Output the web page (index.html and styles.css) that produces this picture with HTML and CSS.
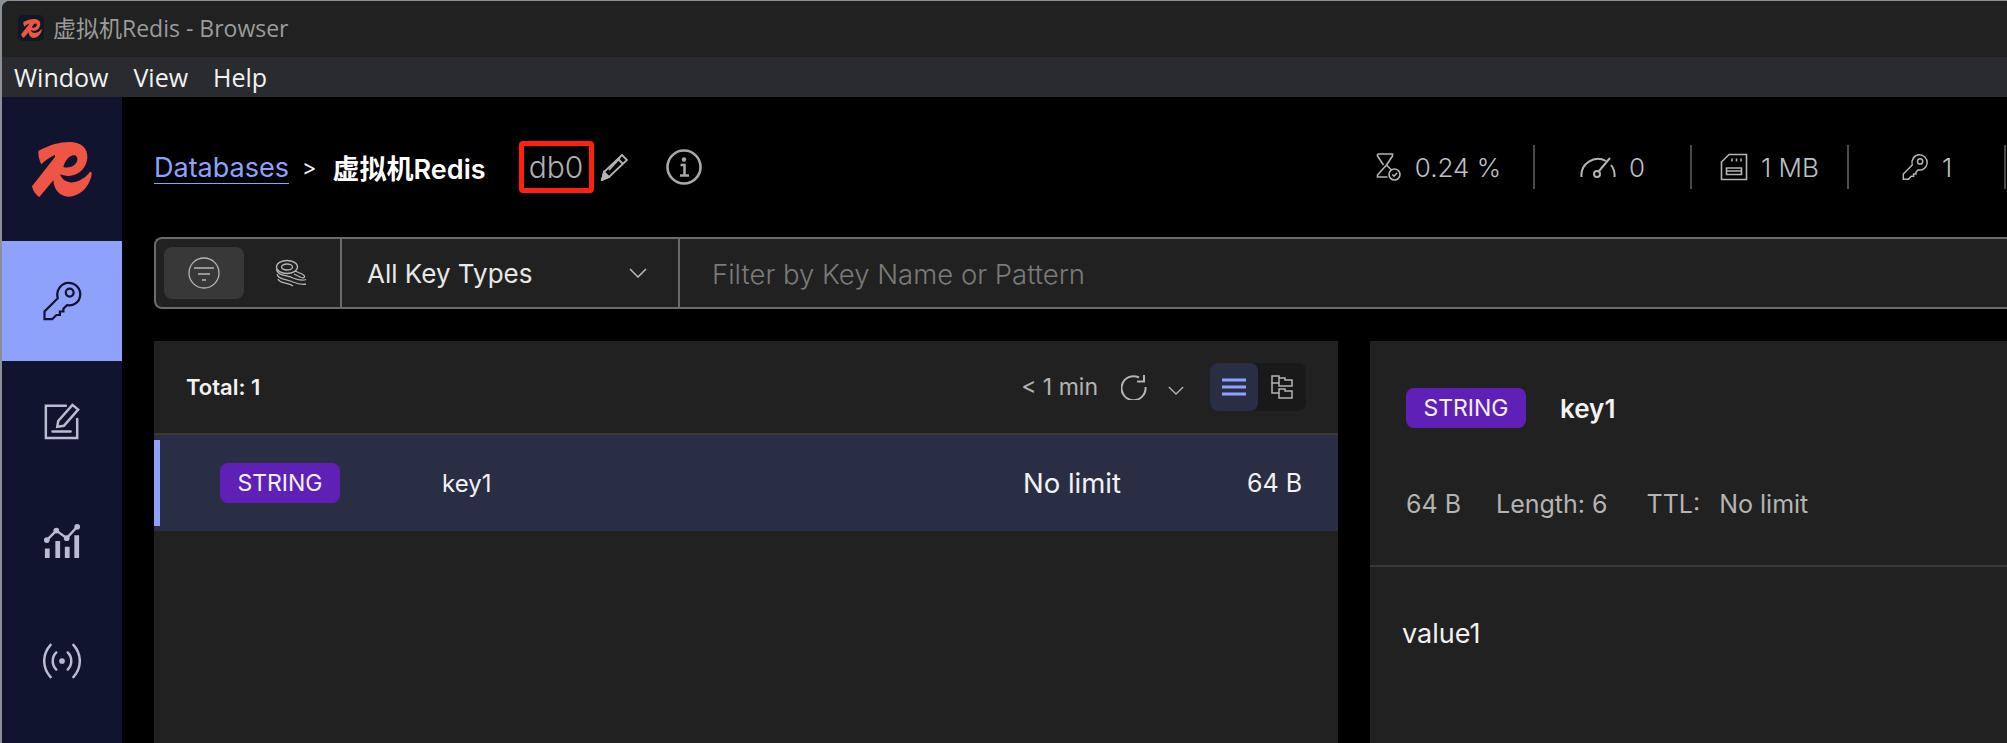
FILE: index.html
```html
<!DOCTYPE html>
<html lang="en">
<head>
  <meta charset="UTF-8">
  <title>虚拟机Redis - Browser</title>
  <link rel="stylesheet" href="styles.css">
</head>
<body>
  <svg class="defs" width="0" height="0">
    <symbol id="logo" viewBox="96 125 180 165">
      <path fill-rule="evenodd" d="M115 152 C150 133 180 125 208 125 C245 125 264 145 262 172 C260 200 240 222 212 226 C200 228 188 225 180 222 C186 240 205 250 225 245 C245 240 260 228 270 214 C276 214 276 220 274 228 C265 265 235 290 205 289 C180 288 162 270 160 240 L118 290 C108 285 98 270 96 258 L165 170 L165 163 C150 170 135 180 124 192 C118 180 114 165 115 152Z M190 200 C195 180 210 162 225 165 C235 170 235 185 222 195 C212 202 200 203 190 200Z"/>
    </symbol>
    <symbol id="key" viewBox="0 0 30 30">
      <path d="M19.5 2 C24.5 2 28.5 6 28 11 C27.5 16 23 19 18.5 18 L16 20.5 V22.5 H13.5 V25 H11 L8 28 H2.5 V22.5 L12 13 C10.5 8 14 2 19.5 2Z"/>
      <circle cx="20.5" cy="9" r="2.8"/>
    </symbol>
  </svg>

  <div class="window">
    <!-- Title + menu -->
    <div class="titlebar">
      <span class="app-icon"><svg class="logo-small"><use href="#logo"/></svg></span>
      <span class="app-title">虚拟机Redis - Browser</span>
    </div>
    <div class="menubar">
      <span>Window</span>
      <span>View</span>
      <span>Help</span>
    </div>

    <div class="app">
      <!-- Sidebar -->
      <nav class="sidebar">
        <div class="side-logo"><svg class="logo-big"><use href="#logo"/></svg></div>
        <div class="side-item active"><svg class="icon side-key"><use href="#key"/></svg></div>
        <div class="side-item">
          <svg class="icon side-icon" viewBox="0 0 40 40">
            <path d="M24 4 H3 V38 H36 V18"/>
            <path d="M15 26 L16 20 L31 3 L37 8 L22 25 Z"/>
            <path d="M10 31 H29"/>
          </svg>
        </div>
        <div class="side-item">
          <svg class="icon side-icon" viewBox="0 0 40 40">
            <path d="M4 19 L14 9 L25 17 L36 5"/>
            <circle class="dot" cx="4" cy="19" r="3"/>
            <circle class="dot" cx="14" cy="9" r="3"/>
            <circle class="dot" cx="25" cy="17" r="3"/>
            <circle class="dot" cx="36" cy="5" r="3"/>
            <path class="bar" d="M2 28 h5 v10 h-5z M13 20 h5 v18 h-5z M23 26 h5 v12 h-5z M33 14 h5 v24 h-5z"/>
          </svg>
        </div>
        <div class="side-item">
          <svg class="icon side-icon" viewBox="0 0 40 40">
            <path d="M8 3 C-1 13 -1 27 8 37"/>
            <path d="M32 3 C41 13 41 27 32 37"/>
            <path d="M14 11 C9 16 9 24 14 29"/>
            <path d="M26 11 C31 16 31 24 26 29"/>
            <circle class="dot" cx="20" cy="20" r="3"/>
          </svg>
        </div>
      </nav>

      <main class="main">
        <!-- Header -->
        <header class="header">
          <a class="crumb-link">Databases</a>
          <span class="crumb-sep">&gt;</span>
          <span class="crumb-name">虚拟机Redis</span>
          <span class="db-index">db0</span>
          <svg class="icon pencil" viewBox="0 0 28 28">
            <path d="M22 2 L27 7 L9 24 L2 27 L4 19 Z"/>
            <path d="M18 6 L23 11"/>
            <path d="M9 17 L20 5"/>
            <path class="tip" d="M4 19 L9 24 L2 27 Z"/>
          </svg>
          <svg class="icon info" viewBox="0 0 36 36">
            <circle cx="18" cy="18" r="16.5"/>
            <circle class="dot" cx="18" cy="10.5" r="2.2"/>
            <path d="M14.5 16 H18.5 V26 M14 26.5 H23"/>
          </svg>
          <div class="stats">
            <div class="stat stat-cpu">
              <svg class="icon stat-icon" viewBox="0 0 25 28">
                <path d="M2 1 H17 V3 L11 12 L16 17 M11 12 L2 22 V24 H12 M2 1 V3 L8 12"/>
                <circle cx="19" cy="21.5" r="5.5"/>
                <path d="M16.8 21.5 L18.5 23.2 L21.5 20"/>
              </svg>
              <span>0.24 %</span>
            </div>
            <div class="stat">
              <svg class="icon gauge" viewBox="0 0 36 22">
                <path d="M1.5 21 A16.5 16.5 0 0 1 26 5"/>
                <path d="M31 9 A16.5 16.5 0 0 1 34.5 21"/>
                <path d="M19 15 L30 2"/>
                <circle cx="17" cy="18" r="3"/>
              </svg>
              <span>0</span>
            </div>
            <div class="stat">
              <svg class="icon stat-icon" viewBox="0 0 28 28">
                <path d="M9 1.5 H26.5 V26.5 H1.5 V9 Z"/>
                <path d="M6.5 15 H21.5 V21.5 H6.5 Z"/>
                <path d="M12 5.5 V8.5 M16.5 5.5 V8.5 M21 5.5 V8.5"/>
                <path d="M6.5 18 H21.5"/>
              </svg>
              <span>1 MB</span>
            </div>
            <div class="stat">
              <svg class="icon stat-icon"><use href="#key"/></svg>
              <span>1</span>
            </div>
          </div>
        </header>

        <!-- Filter bar -->
        <div class="filter-bar">
          <div class="mode-group">
            <button class="mode-btn on">
              <svg class="icon mode-icon" viewBox="0 0 32 32">
                <circle cx="16" cy="16" r="15"/>
                <path d="M6 11 H26 M10 17 H22 M14 23 H18"/>
              </svg>
            </button>
            <button class="mode-btn">
              <svg class="icon mode-icon" viewBox="0 0 32 28">
                <ellipse cx="12" cy="8" rx="10.5" ry="6.5"/>
                <ellipse cx="12" cy="8" rx="5.5" ry="3"/>
                <path d="M20 12 L27 15 C31 17 30 20 26 18.5 L19 15"/>
                <path d="M1.5 10 C2 17 12 16 18 19 C23 21 27 22 31 20.5"/>
                <path d="M2 15 C3 21 13 20 18 23 C23 25 27 26 31 25"/>
                <path d="M3 20 C5 25 13 23 18 27"/>
              </svg>
            </button>
          </div>
          <div class="type-select">
            <span>All Key Types</span>
            <svg class="icon chevron" viewBox="0 0 18 10"><path d="M1 1 L9 9 L17 1"/></svg>
          </div>
          <div class="filter-input">Filter by Key Name or Pattern</div>
        </div>

        <div class="panels">
          <!-- Key list -->
          <section class="panel">
            <div class="list-head">
              <span class="total">Total: 1</span>
              <span class="refreshed">&lt; 1 min</span>
              <svg class="icon refresh" viewBox="0 0 26 26">
                <path d="M18 3.5 A12 12 0 1 0 24.5 13"/>
                <path d="M23 1 V7.5 H16"/>
              </svg>
              <svg class="icon chevron small" viewBox="0 0 18 10"><path d="M1 1 L9 9 L17 1"/></svg>
              <div class="view-toggle">
                <div class="view-btn on">
                  <svg class="icon list-icon" viewBox="0 0 24 18"><path d="M0 2 H24 M0 9 H24 M0 16 H24"/></svg>
                </div>
                <div class="view-btn">
                  <svg class="icon tree-icon" viewBox="0 0 24 24">
                    <path d="M2 1 H9 V8 H2 Z M9 3 H15 V5 H22 V11 H9 V8"/>
                    <path d="M2 8 V18 H9"/>
                    <path d="M9 14 H15 V16 H22 V23 H9 Z"/>
                  </svg>
                </div>
              </div>
            </div>
            <div class="key-row">
              <div><span class="badge">STRING</span></div>
              <span>key1</span>
              <span class="key-ttl">No limit</span>
              <span class="key-size">64 B</span>
            </div>
          </section>

          <!-- Key details -->
          <section class="panel">
            <div class="detail-head">
              <div class="detail-title">
                <span class="badge">STRING</span>
                <span class="detail-name">key1</span>
              </div>
              <div class="detail-meta">
                <span>64 B</span>
                <span>Length: 6</span>
                <span class="ttl"><span>TTL:</span><span>No limit</span></span>
              </div>
            </div>
            <div class="detail-value">value1</div>
          </section>
        </div>
      </main>
    </div>
  </div>
</body>
</html>
```

FILE: styles.css
```css
* { margin: 0; padding: 0; box-sizing: border-box; }
html, body { height: 100%; overflow: hidden; }
body {
  font-family: 'Inter', 'Noto Sans CJK SC', sans-serif;
  background: #8b8f96;
  color: #f2f2f2;
  padding: 1px 0 0 2px;
}
.defs { position: absolute; }
.icon {
  display: block;
  flex: none;
  fill: none;
  stroke: #b4b4b4;
  stroke-width: 2;
}
.icon .dot { fill: currentColor; stroke: none; }

.window {
  height: 100%;
  background: #000;
  border-top-left-radius: 8px;
  overflow: hidden;
  display: flex;
  flex-direction: column;
}

/* title + menu */
.titlebar {
  height: 56px;
  flex: none;
  background: #212121;
  display: flex;
  align-items: center;
  gap: 9px;
  padding: 0 0 2px 16px;
  color: #9b9b9b;
  font-family: 'Open Sans', 'Noto Sans CJK SC', sans-serif;
  font-size: 23px;
}
.app-title { margin-top: -3px; }
.app-icon {
  width: 26px;
  height: 26px;
  background: #0c1a26;
  border-radius: 5px;
  display: flex;
  align-items: center;
  justify-content: center;
}
.logo-small { width: 21px; height: 19px; fill: #ef5544; }
.menubar {
  height: 40px;
  flex: none;
  background: #2a2b2f;
  display: flex;
  align-items: center;
  gap: 25px;
  padding-left: 12px;
  font-family: 'Open Sans', sans-serif;
  font-size: 25px;
}

.app { flex: 1; display: flex; min-height: 0; }

/* sidebar */
.sidebar { width: 120px; flex: none; background: #10142f; }
.side-logo { height: 144px; display: flex; align-items: center; justify-content: center; }
.logo-big { width: 60px; height: 55px; fill: #ef5544; }
.side-item { height: 120px; display: flex; align-items: center; justify-content: center; color: #b9bdcf; }
.side-item.active { background: #8ea2fb; }
.side-key { width: 42px; height: 42px; stroke: #10142f; stroke-width: 1.6; }
.side-icon { width: 38px; height: 38px; stroke: #b9bdcf; stroke-width: 2.6; stroke-linecap: round; }
.side-icon .bar { fill: #b9bdcf; stroke: none; }

/* header */
.main { flex: 1; min-width: 0; display: flex; flex-direction: column; padding-left: 32px; }
.header { height: 140px; flex: none; display: flex; align-items: center; font-size: 27px; }
.crumb-link { color: #8ea2fb; text-decoration: underline; text-underline-offset: 6px; text-decoration-thickness: 1px; }
.crumb-sep { margin: 0 16px 0 13px; color: #f2f2f2; font-size: 22px; }
.crumb-name { font-weight: 600; color: #fff; }
.db-index {
  margin-left: 33px;
  width: 75px;
  height: 52px;
  border: 5px solid #ff2010;
  border-radius: 4px;
  color: #b0b0b0;
  font-size: 30px;
  font-weight: 300;
  display: flex;
  align-items: center;
  justify-content: center;
}
.pencil { width: 28px; height: 28px; margin-left: 6px; stroke: #b4b4b4; stroke-width: 1.8; }
.pencil .tip { fill: #b4b4b4; }
.info { width: 36px; height: 36px; margin-left: 38px; color: #a8a8a8; stroke: #a8a8a8; stroke-width: 2.6; }

.stats { margin-left: auto; margin-right: 1px; display: flex; }
.stat {
  width: 157px;
  height: 44px;
  display: flex;
  align-items: center;
  justify-content: center;
  gap: 13px;
  border-right: 2px solid #4a4a4a;
  color: #bcc0c8;
  font-size: 26px;
  font-weight: 300;
}
.stat-cpu { width: 193px; }
.stat-icon { width: 28px; height: 28px; stroke-width: 1.6; }
.gauge { width: 36px; height: 22px; stroke-width: 2; }

/* filter bar */
.filter-bar {
  height: 72px;
  flex: none;
  display: flex;
  background: #212121;
  border: 2px solid #6b6b6b;
  border-right: 0;
  border-top-left-radius: 8px;
  border-bottom-left-radius: 8px;
}
.mode-group {
  width: 186px;
  flex: none;
  display: flex;
  padding: 8px;
  border-right: 2px solid #6b6b6b;
}
.mode-btn {
  width: 80px;
  height: 52px;
  border: 0;
  border-radius: 8px;
  background: transparent;
  display: flex;
  align-items: center;
  justify-content: center;
}
.mode-btn.on { background: #383838; }
.mode-btn + .mode-btn { margin-left: 15px; width: 64px; }
.mode-icon { width: 32px; height: 32px; stroke-width: 1.3; }
.type-select {
  width: 338px;
  flex: none;
  display: flex;
  align-items: center;
  justify-content: space-between;
  padding: 0 31px 0 25px;
  border-right: 2px solid #6b6b6b;
  font-size: 26px;
  color: #e8e8e8;
}
.chevron { width: 18px; height: 10px; stroke-width: 1.6; }
.filter-input { display: flex; align-items: center; padding: 2px 0 0 32px; color: #7a7a7a; font-size: 27.5px; font-weight: 300; }

/* panels */
.panels {
  flex: 1;
  min-height: 0;
  margin-top: 32px;
  display: grid;
  grid-template-columns: 1184px 1fr;
  gap: 32px;
}
.panel { background: #212121; }
.list-head {
  height: 94px;
  display: flex;
  align-items: center;
  padding: 0 32px;
  border-bottom: 2px solid #3a3a3a;
}
.total { font-size: 22px; font-weight: 600; margin-right: auto; }
.refreshed { color: #b4b4b4; font-size: 23px; }
.refresh { width: 26px; height: 26px; margin-left: 23px; stroke-width: 2; }
.chevron.small { width: 16px; height: 9px; margin-left: 21px; margin-top: 6px; stroke-width: 1.5; }
.view-toggle { margin-left: 26px; display: flex; background: #191919; border-radius: 8px; }
.view-btn { width: 48px; height: 48px; display: flex; align-items: center; justify-content: center; border-radius: 8px; }
.view-btn.on { background: #2a2e45; }
.list-icon { width: 24px; height: 18px; stroke: #8ea2fb; stroke-width: 3; }
.tree-icon { width: 24px; height: 24px; stroke-width: 1.5; }

.key-row {
  position: relative;
  height: 96px;
  display: grid;
  grid-template-columns: 222px 581px 1fr auto;
  align-items: center;
  padding: 0 36px 0 66px;
  background: #2a2e45;
  font-size: 24px;
}
.key-row::before {
  content: "";
  position: absolute;
  left: 0;
  top: 5px;
  bottom: 5px;
  width: 6px;
  background: #8ea2fb;
}
.key-ttl { font-size: 27.5px; }
.key-size { font-size: 25px; }
.badge {
  display: inline-flex;
  width: 120px;
  height: 40px;
  align-items: center;
  justify-content: center;
  background: #5f20b8;
  border-radius: 8px;
  color: #f2f2f2;
  font-size: 23px;
}
.key-row > div { display: flex; }

.detail-head {
  height: 226px;
  padding: 47px 36px 0;
  border-bottom: 2px solid #3a3a3a;
}
.detail-title { display: flex; align-items: center; gap: 34px; }
.detail-name { font-size: 26px; font-weight: 600; }
.detail-meta {
  display: flex;
  gap: 35px;
  margin-top: 61px;
  color: #b4b4b4;
  font-size: 25px;
}
.ttl { display: flex; gap: 19px; margin-left: 4px; }
.detail-value { padding: 50px 32px 0; font-size: 27px; }
```
